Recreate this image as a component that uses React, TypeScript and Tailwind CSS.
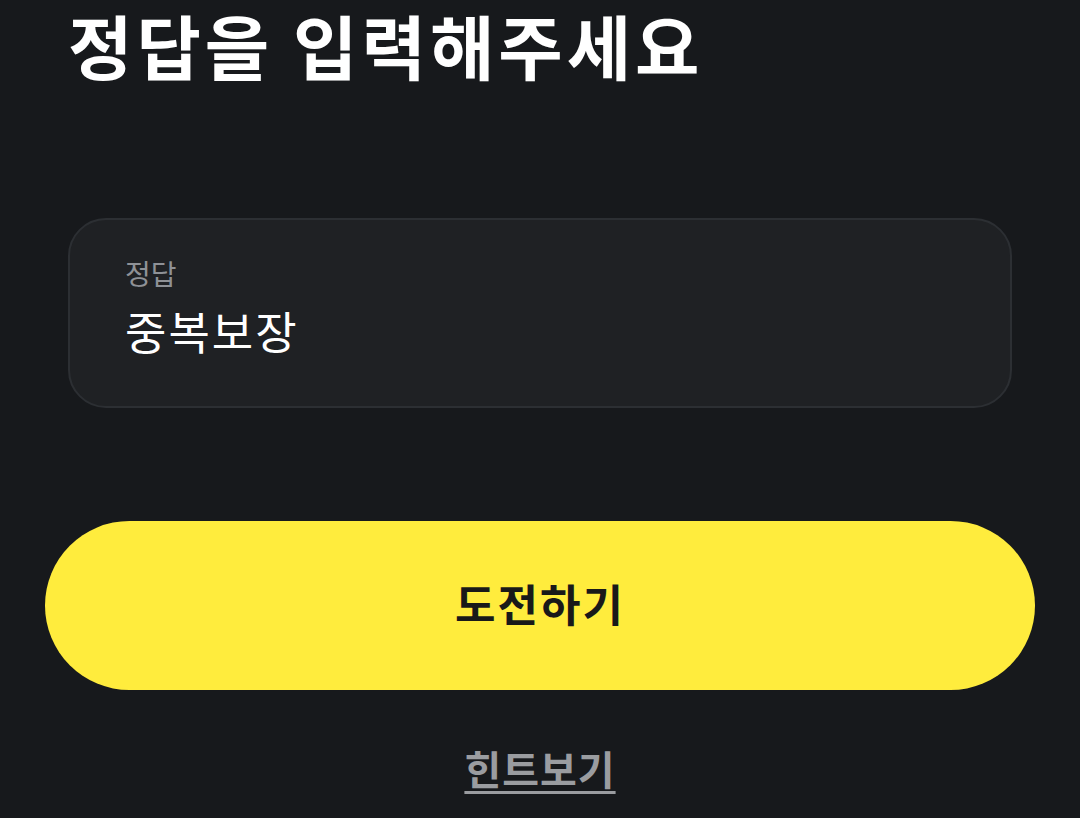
export default function App() {
  return (
    <div
      className="flex h-[818px] w-[1080px] flex-col overflow-hidden bg-[#17191c]"
      style={{ fontFamily: '"Noto Sans CJK KR", "Noto Sans", sans-serif' }}
    >
      {/* 제목 */}
      <h1 className="mt-[5px] pl-[68px] text-[70px] font-bold leading-[80px] tracking-[4px] text-white">
        정답을 입력해주세요
      </h1>

      {/* 정답 입력 박스 */}
      <div className="mx-[68px] mt-[133px] flex h-[190px] flex-col rounded-[38px] border-2 border-[#2c2f33] bg-[#1f2124] pl-[55px] pt-[35px]">
        <span className="text-[28px] leading-[36px] text-[#8e9196]">정답</span>
        <span className="mt-[11px] text-[45px] leading-[58px] tracking-[2px] text-white">중복보장</span>
      </div>

      {/* 도전하기 버튼 */}
      <button className="mx-[45px] mt-[113px] flex h-[169px] items-center justify-center rounded-full bg-[#ffec3d] pb-[6px] text-[44px] font-bold tracking-[2px] text-[#191919]">
        도전하기
      </button>

      <div className="mt-[50px] flex justify-center">
        <span className="text-[40px] font-bold leading-[56px] tracking-[1px] text-[#9a9ca0] underline decoration-[3px] underline-offset-[6px]">
          힌트보기
        </span>
      </div>
    </div>
  )
}
